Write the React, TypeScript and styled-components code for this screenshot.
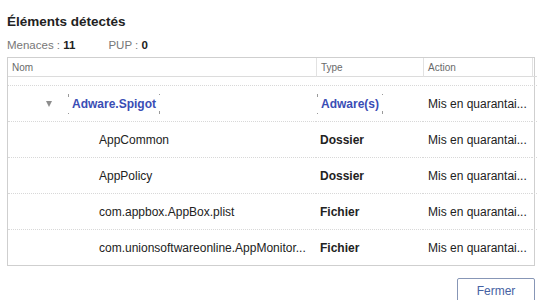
import React from 'react'
import styled, { createGlobalStyle } from 'styled-components'

const GlobalStyle = createGlobalStyle`
  html, body {
    margin: 0;
    padding: 0;
    background: #fff;
    overflow: hidden;
  }
  body {
    font-family: 'Liberation Sans', Arial, Helvetica, sans-serif;
    color: #222;
  }
`

const Page = styled.div`
  width: 546px;
  height: 300px;
  box-sizing: border-box;
  padding: 13px 11px 0 7px;
  display: flex;
  flex-direction: column;
`

const Title = styled.h1`
  margin: 0;
  font-size: 13.5px;
  line-height: 17px;
  font-weight: bold;
  color: #222;
`

const Stats = styled.div`
  display: flex;
  gap: 33px;
  margin-top: 8px;
  font-size: 11.5px;
  line-height: 14px;
  color: #777;
`

const Stat = styled.span`
  b {
    color: #222;
    font-weight: bold;
  }
`

const Table = styled.div`
  margin-top: 5px;
  border: 1px solid #cfcfcf;
  display: grid;
  grid-template-columns: 308px 107px 109px 1fr;
  height: 209px;
  box-sizing: border-box;
  align-content: start;
`

const HeadCell = styled.div<{ $sep?: boolean }>`
  height: 18px;
  display: flex;
  align-items: center;
  padding-left: 4px;
  font-size: 10px;
  color: #6a6a6a;
  border-bottom: 1px solid #dcdcdc;
  border-left: ${({ $sep }) => ($sep ? '1px solid #e2e2e2' : 'none')};
`

const Spacer = styled.div`
  grid-column: 1 / -1;
  height: 8px;
  border-bottom: 1px dotted #d8d8d8;
`

const Cell = styled.div<{ $indent?: number; $last?: boolean }>`
  height: 36px;
  display: flex;
  align-items: center;
  padding-left: ${({ $indent }) => $indent ?? 4}px;
  font-size: 12px;
  white-space: nowrap;
  overflow: hidden;
  min-width: 0;
  border-bottom: ${({ $last }) => ($last ? 'none' : '1px dotted #d8d8d8')};
  box-sizing: border-box;
`

const Toggle = styled.span`
  width: 0;
  height: 0;
  border-left: 3.5px solid transparent;
  border-right: 3.5px solid transparent;
  border-top: 6px solid #8d8d8d;
  margin-right: 16px;
`

const Focused = styled.span`
  color: #3a4db5;
  font-weight: bold;
  padding: 3px 4px;
  background-image:
    linear-gradient(#9a9a9a, #9a9a9a),
    linear-gradient(#9a9a9a, #9a9a9a),
    linear-gradient(#9a9a9a, #9a9a9a),
    linear-gradient(#9a9a9a, #9a9a9a);
  background-size: 1px 3px, 1px 1px, 1px 1px, 1px 3px;
  background-position: left top, left bottom, right top, right bottom;
  background-repeat: no-repeat;
`

const Kind = styled.span`
  font-weight: bold;
  color: #222;
`

const Footer = styled.div`
  display: flex;
  justify-content: flex-end;
  margin-top: 12px;
`

const Button = styled.button`
  width: 78px;
  height: 27px;
  background: #fff;
  border: 1.5px solid #8796b6;
  border-radius: 2px;
  color: #4662a3;
  font-family: 'Liberation Sans', Arial, sans-serif;
  font-size: 12px;
  padding: 0 0 2px;
`

type Item = { name: string; type: string }

const items: Item[] = [
  { name: 'AppCommon', type: 'Dossier' },
  { name: 'AppPolicy', type: 'Dossier' },
  { name: 'com.appbox.AppBox.plist', type: 'Fichier' },
  { name: 'com.unionsoftwareonline.AppMonitor...', type: 'Fichier' },
]

export default function App() {
  return (
    <>
      <GlobalStyle />
      <Page>
        <Title>Éléments détectés</Title>
        <Stats>
          <Stat>
            Menaces : <b>11</b>
          </Stat>
          <Stat>
            PUP : <b>0</b>
          </Stat>
        </Stats>
        <Table>
          <HeadCell>Nom</HeadCell>
          <HeadCell $sep>Type</HeadCell>
          <HeadCell $sep>Action</HeadCell>
          <HeadCell $sep />
          <Spacer />

          <Cell $indent={38}>
            <Toggle />
            <Focused>Adware.Spigot</Focused>
          </Cell>
          <Cell $indent={1}>
            <Focused>Adware(s)</Focused>
          </Cell>
          <Cell $indent={5}>Mis en quarantai...</Cell>
          <Cell />

          {items.map((it, i) => {
            const last = i === items.length - 1
            return (
              <React.Fragment key={it.name}>
                <Cell $indent={91} $last={last}>
                  {it.name}
                </Cell>
                <Cell $last={last}>
                  <Kind>{it.type}</Kind>
                </Cell>
                <Cell $indent={5} $last={last}>
                  Mis en quarantai...
                </Cell>
                <Cell $last={last} />
              </React.Fragment>
            )
          })}
        </Table>
        <Footer>
          <Button>Fermer</Button>
        </Footer>
      </Page>
    </>
  )
}
